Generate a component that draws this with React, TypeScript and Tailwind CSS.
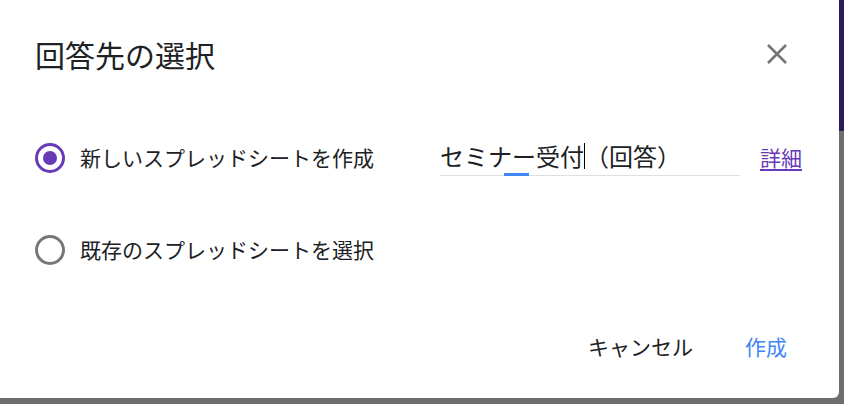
const jp = "font-['Noto_Sans_CJK_JP','Noto_Sans',sans-serif]";

function Radio({ checked }: { checked: boolean }) {
  return (
    <span
      className={
        checked
          ? "flex h-[30px] w-[30px] shrink-0 items-center justify-center rounded-full border-[3px] border-[#673ab7]"
          : "flex h-[30px] w-[30px] shrink-0 items-center justify-center rounded-full border-[3px] border-[#777777]"
      }
    >
      {checked && <span className="h-[14px] w-[14px] rounded-full bg-[#673ab7]" />}
    </span>
  );
}

export default function App() {
  return (
    <div className={`relative h-[404px] w-[844px] overflow-hidden bg-[#6e6e6e] ${jp}`}>
      {/* backdrop: page header peeking out on the right */}
      <div className="absolute right-0 top-0 h-[131px] w-[10px] bg-[#2d1b57]" />

      <div className="relative flex h-[398px] w-[839px] flex-col rounded-br-[6px] bg-white pt-[36px]">
        <div className="flex h-[36px] items-center justify-between pl-[35px] pr-[50px]">
          <h1 className="text-[30px] leading-[36px] font-normal text-[#202124]">回答先の選択</h1>
          <button className="flex h-[24px] w-[24px] items-center justify-center">
            <svg viewBox="0 0 22 22" className="h-[22px] w-[22px]">
              <path d="M2 2 L20 20 M20 2 L2 20" stroke="#757575" strokeWidth="2.6" fill="none" />
            </svg>
          </button>
        </div>

        <div className="mt-[64px] flex h-[44px] items-center pl-[35px]">
          <Radio checked />
          <span className="ml-[15px] w-[360px] shrink-0 text-[21px] text-[#202124]">新しいスプレッドシートを作成</span>
          <div className="relative flex h-[40px] w-[300px] items-end self-start border-b border-[#e0e0e0] pb-[4px]">
            <span className="flex items-center text-[24px] leading-[30px] text-[#202124]">
              セミナー受付
              <span className="h-[26px] w-[1px] bg-black" />
              （回答）
            </span>
            <span className="absolute bottom-[-1px] left-[64px] h-[3px] w-[25px] bg-[#4285f4]" />
          </div>
          <a className="ml-[20px] text-[21px] text-[#673ab7] underline underline-offset-[3px]">詳細</a>
        </div>

        <div className="mt-[48px] flex h-[44px] items-center pl-[35px]">
          <Radio checked={false} />
          <span className="ml-[15px] text-[21px] text-[#202124]">既存のスプレッドシートを選択</span>
        </div>

        <div className="mt-[55px] flex h-[40px] items-center justify-end gap-[52px] pr-[52px]">
          <button className="text-[21px] text-[#202124]">キャンセル</button>
          <button className="text-[21px] text-[#4285f4]">作成</button>
        </div>
      </div>
    </div>
  );
}
